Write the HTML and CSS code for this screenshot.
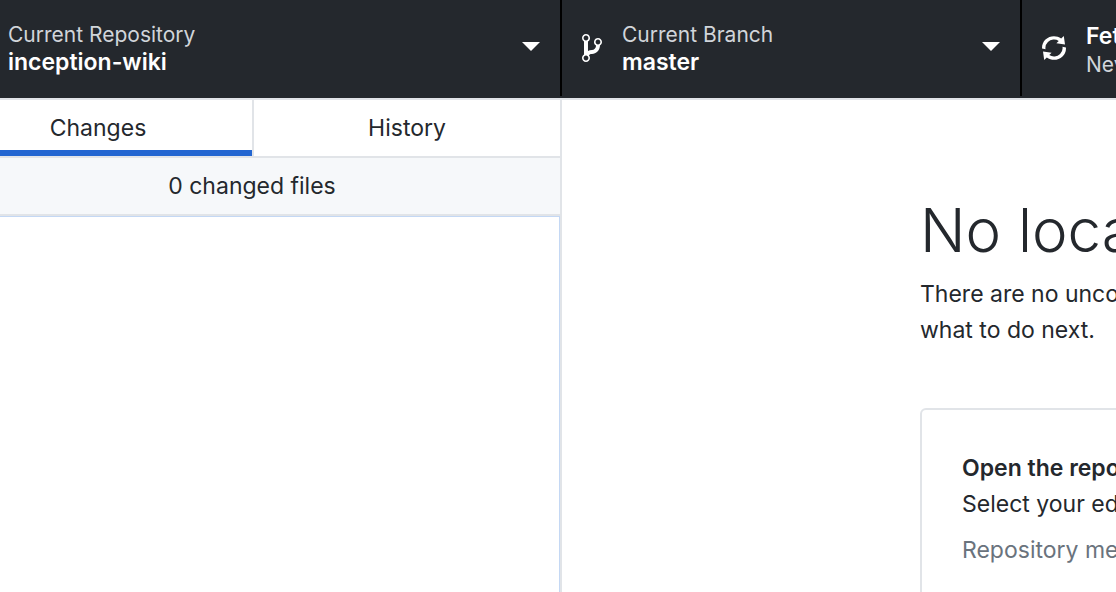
FILE: index.html
```html
<!DOCTYPE html>
<html lang="en">
<head>
<meta charset="utf-8">
<title>inception-wiki</title>
<link rel="stylesheet" href="styles.css">
</head>
<body>
<div class="app">
  <header class="toolbar">
    <button class="tool tool-repository" type="button">
      <span class="tool-text"><span class="tool-label">Current Repository</span><strong class="tool-value">inception-wiki</strong></span>
      <svg class="caret" viewBox="0 0 18 12" aria-hidden="true"><path d="M0 0l9 9 9-9z"/></svg>
    </button>
    <button class="tool tool-branch" type="button">
      <svg class="icon-branch" viewBox="0 0 10 16" aria-hidden="true"><path fill-rule="evenodd" d="M10 5c0-1.11-.89-2-2-2a1.993 1.993 0 0 0-1 3.72v.3c-.02.52-.23.98-.63 1.38-.4.4-.86.61-1.38.63-.83.02-1.48.16-2 .45V4.72a1.993 1.993 0 0 0-1-3.72C.88 1 0 1.89 0 3a2 2 0 0 0 1 1.72v6.56c-.59.35-1 .99-1 1.72 0 1.11.89 2 2 2 1.11 0 2-.89 2-2 0-.53-.2-1-.53-1.36.09-.06.48-.41.59-.47.25-.11.56-.17.94-.17 1.05-.05 1.95-.45 2.75-1.25S8.95 7.77 9 6.73h-.02C9.59 6.37 10 5.73 10 5zM2 1.8c.66 0 1.2.55 1.2 1.2 0 .65-.55 1.2-1.2 1.2C1.35 4.2.8 3.65.8 3c0-.65.55-1.2 1.2-1.2zm0 12.41c-.66 0-1.2-.55-1.2-1.2 0-.65.55-1.2 1.2-1.2.65 0 1.2.55 1.2 1.2 0 .65-.55 1.2-1.2 1.2zm6-8c-.66 0-1.2-.55-1.2-1.2 0-.65.55-1.2 1.2-1.2.65 0 1.2.55 1.2 1.2 0 .65-.55 1.2-1.2 1.2z"/></svg>
      <span class="tool-text"><span class="tool-label">Current Branch</span><strong class="tool-value">master</strong></span>
      <svg class="caret" viewBox="0 0 18 12" aria-hidden="true"><path d="M0 0l9 9 9-9z"/></svg>
    </button>
    <button class="tool tool-fetch" type="button">
      <svg class="icon-sync" viewBox="0 0 12 16" aria-hidden="true"><path fill-rule="evenodd" d="M10.24 7.4a4.15 4.15 0 0 1-1.2 3.6 4.346 4.346 0 0 1-5.41.54L4.8 10.4.5 9.8l.6 4.2 1.31-1.26c2.36 1.74 5.7 1.57 7.84-.54a5.876 5.876 0 0 0 1.74-4.46l-1.75-.34zM2.96 5a4.346 4.346 0 0 1 5.41-.54L7.2 5.6l4.3.6-.6-4.2-1.31 1.26c-2.36-1.74-5.7-1.57-7.85.54C.5 5.03-.06 6.65.01 8.26l1.75.35A4.17 4.17 0 0 1 2.96 5z"/></svg>
      <span class="tool-text"><strong class="tool-value">Fetch origin</strong><span class="tool-label">Never fetched</span></span>
    </button>
  </header>
  <div class="workspace">
    <aside class="sidebar">
      <nav class="tabs">
        <button class="tab tab-active" type="button">Changes</button>
        <button class="tab" type="button">History</button>
      </nav>
      <div class="summary">0 changed files</div>
      <div class="file-list"></div>
    </aside>
    <main class="content">
      <h1 class="title">No local changes</h1>
      <p class="intro">There are no uncommitted changes in this repository. Here are some friendly suggestions for<br>what to do next.</p>
      <section class="card">
        <h2 class="card-title">Open the repository in your external editor</h2>
        <p class="card-text">Select your editor in Preferences</p>
        <p class="card-hint">Repository menu</p>
      </section>
    </main>
  </div>
</div>
</body>
</html>
```
FILE: styles.css
```css
* {
  box-sizing: border-box;
}

body {
  margin: 0;
  overflow: hidden;
  background: #fff;
  color: #24282d;
  font: 23px/36px Inter, "Liberation Sans", sans-serif;
}

h1, h2, p {
  margin: 0;
}

button {
  border: 0;
  background: none;
  color: inherit;
  font: inherit;
}

/* The window's left gutter sits outside the viewport. */
.app {
  display: flex;
  flex-direction: column;
  min-height: 100vh;
  margin-left: -56px;
}

.toolbar {
  display: flex;
  padding-bottom: 2px;
  border-bottom: 2px solid #e1e4e8;
  background: #24282d;
}

.tool {
  display: flex;
  flex: none;
  align-items: center;
  height: 96px;
  padding: 0 20px;
  border-right: 2px solid #000;
  color: #fff;
  text-align: left;
  white-space: nowrap;
}

.tool-repository {
  width: 618px;
  padding-left: 64px;
}

.tool-branch {
  width: 460px;
}

.tool-fetch {
  flex: 1;
  min-width: 0;
  border-right: 0;
}

.tool-text {
  display: flex;
  flex: 1;
  flex-direction: column;
}

.tool-fetch .tool-text {
  gap: 2px;
  padding-top: 6px;
}

.tool-label {
  color: #d1d5da;
  font-size: 21px;
  line-height: 28px;
}

.tool-value {
  font-size: 23px;
  font-weight: 600;
  line-height: 26px;
}

.tool svg {
  flex: none;
  fill: #fff;
}

.icon-branch {
  width: 20px;
  height: 32px;
  margin-right: 20px;
}

.icon-sync {
  width: 24px;
  height: 32px;
  margin-right: 20px;
}

.caret {
  width: 18px;
  height: 12px;
}

.workspace {
  display: flex;
  flex: 1;
}

.sidebar {
  display: flex;
  flex: none;
  flex-direction: column;
  width: 618px;
  border-right: 2px solid #e1e4e8;
}

.tabs {
  display: grid;
  grid-template-columns: 1fr 1fr;
  border-bottom: 2px solid #e1e4e8;
}

.tab {
  height: 56px;
  padding: 0;
}

.tab + .tab {
  border-left: 2px solid #e1e4e8;
}

.tab-active {
  box-shadow: inset 0 -6px #2366d1;
}

.summary {
  padding: 10px 0;
  border-bottom: 2px solid #e1e4e8;
  background: #f6f8fa;
  text-align: center;
}

.file-list {
  flex: 1;
  border: 1px solid #c4d8f4;
  border-bottom: 0;
}

.content {
  flex: 1;
  min-width: 0;
  padding: 92px 0 0 358px;
  overflow: hidden;
  white-space: nowrap;
}

.title {
  margin-bottom: 8px;
  font-size: 60px;
  font-weight: 300;
  line-height: 76px;
}

.card {
  width: 1200px;
  margin-top: 60px;
  padding: 40px;
  border: 2px solid #e1e4e8;
  border-radius: 6px;
}

.card-title {
  font-size: 23px;
  font-weight: 600;
  line-height: 36px;
}

.card-hint {
  margin-top: 10px;
  color: #6a737d;
}
```
